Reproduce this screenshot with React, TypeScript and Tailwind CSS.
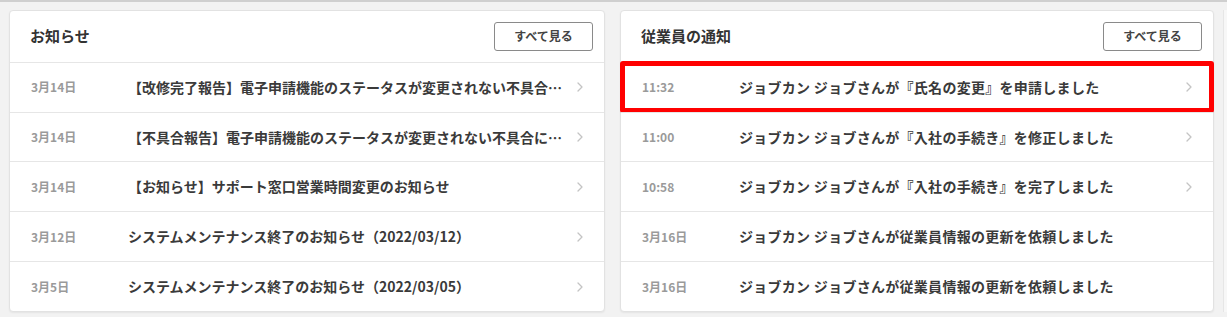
import React from 'react';

type Row = { date: string; text: string; link: boolean };

const news: Row[] = [
  { date: '3月14日', text: '【改修完了報告】電子申請機能のステータスが変更されない不具合について', link: true },
  { date: '3月14日', text: '【不具合報告】電子申請機能のステータスが変更されない不具合について', link: true },
  { date: '3月14日', text: '【お知らせ】サポート窓口営業時間変更のお知らせ', link: true },
  { date: '3月12日', text: 'システムメンテナンス終了のお知らせ（2022/03/12）', link: true },
  { date: '3月5日', text: 'システムメンテナンス終了のお知らせ（2022/03/05）', link: true },
];

const notices: Row[] = [
  { date: '11:32', text: 'ジョブカン ジョブさんが『氏名の変更』を申請しました', link: true },
  { date: '11:00', text: 'ジョブカン ジョブさんが『入社の手続き』を修正しました', link: true },
  { date: '10:58', text: 'ジョブカン ジョブさんが『入社の手続き』を完了しました', link: true },
  { date: '3月16日', text: 'ジョブカン ジョブさんが従業員情報の更新を依頼しました', link: false },
  { date: '3月16日', text: 'ジョブカン ジョブさんが従業員情報の更新を依頼しました', link: false },
];

const font = { fontFamily: '"Noto Sans CJK JP", "Noto Sans", sans-serif' };

const Chevron = () => (
  <svg width="8" height="12" viewBox="0 0 8 12" fill="none" className="flex-shrink-0">
    <path d="M2 2L6 6L2 10" stroke="#c4c4c4" strokeWidth="1.3" strokeLinecap="round" strokeLinejoin="round" />
  </svg>
);

const ListRow: React.FC<{ row: Row; highlight?: boolean; wide?: boolean }> = ({ row, highlight, wide }) => (
  <div className="relative flex items-center h-[50px] border-t border-[#e6e6e6] pl-[21px] pr-[20px]">
    {highlight && (
      <div className="absolute -left-[1px] -right-[1px] -top-[2px] -bottom-[1px] border-[5px] border-[#ff0000] rounded-[3px]" />
    )}
    <span className="w-[97px] flex-shrink-0 text-[12px] font-semibold text-[#9a9a9a]">{row.date}</span>
    <span
      className={`flex-1 min-w-0 truncate text-[14px] font-bold text-[#3a3a3a] pr-[10px] ${wide ? 'tracking-[0.02em]' : ''}`}
    >
      {row.text}
    </span>
    <div className="w-[8px] flex-shrink-0">{row.link && <Chevron />}</div>
  </div>
);

const Card: React.FC<{ title: string; rows: Row[]; highlightFirst?: boolean; wide?: boolean }> = ({
  title,
  rows,
  highlightFirst,
  wide,
}) => (
  <div className="w-[596px] h-[302px] bg-white border border-[#e2e2e2] rounded-[4px] shadow-[0_1px_2px_rgba(0,0,0,0.06)] flex flex-col">
    <div className="flex items-center justify-between h-[51px] pl-[20px] pr-[11px]">
      <span className="text-[15px] font-bold text-[#333]">{title}</span>
      <button className="w-[99px] h-[29px] border border-[#8a8a8a] rounded-[3px] bg-white text-[12px] font-bold text-[#444]">
        すべて見る
      </button>
    </div>
    {rows.map((r, i) => (
      <ListRow key={i} row={r} wide={wide} highlight={highlightFirst && i === 0} />
    ))}
  </div>
);

export default function App() {
  return (
    <div className="w-[1227px] h-[317px] bg-[#f2f2f2] overflow-hidden" style={font}>
      <div className="h-[2px] bg-[#cfcfcf]" />
      <div className="flex pt-[8px] pl-[9px] gap-[15px]">
        <Card title="お知らせ" rows={news} />
        <Card title="従業員の通知" rows={notices} highlightFirst wide />
        <div className="ml-[-6px] w-[4px] h-[302px] bg-[#f7f7f7] border-l border-[#e6e6e6]" />
      </div>
    </div>
  );
}
